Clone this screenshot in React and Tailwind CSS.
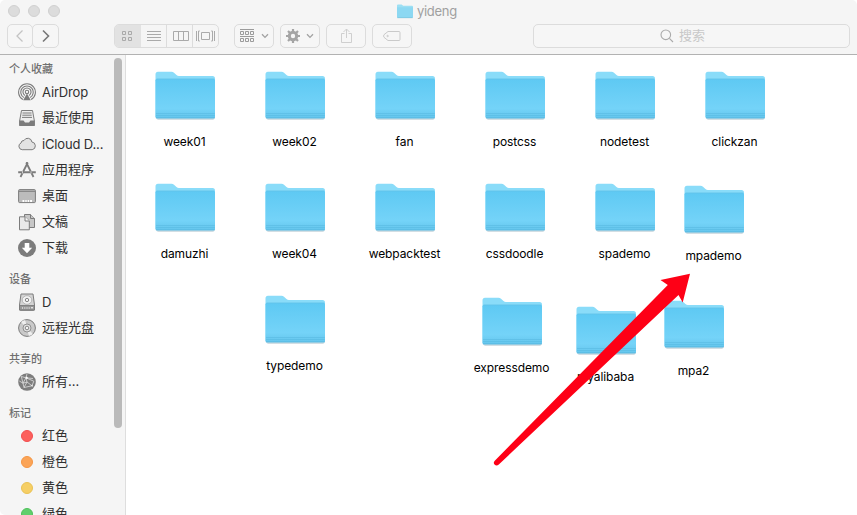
import React from 'react';

const folders = [
  ['week01', 155, 71], ['week02', 265, 71], ['fan', 375, 71], ['postcss', 485, 71], ['nodetest', 595, 71], ['clickzan', 705, 71],
  ['damuzhi', 155, 183], ['week04', 265, 183], ['webpacktest', 375, 183], ['cssdoodle', 485, 183], ['spademo', 595, 183], ['mpademo', 684, 185],
  ['typedemo', 265, 295], ['expressdemo', 482, 297], ['myalibaba', 576, 306], ['mpa2', 664, 300],
];

function FolderShape({ className }) {
  return (
    <svg className={className} viewBox="0 0 60 50" fill="none">
      <path d="M.5 46V3.2Q.5 .7 3 .7H16.5Q18 .7 19 1.7L21.5 4Q22.5 4.9 24 4.9H57.5Q60 4.9 60 7.4V46Z" fill="#8adcf9" />
      <path d="M1 46H60Q60 48.7 58 48.7H3Q1 48.7 1 46Z" fill="#c4d3da" />
      <path d="M.5 9.2Q.5 7.7 2 7.7H58.5Q60 7.7 60 9.2V46Q60 47.5 58.5 47.5H2Q.5 47.5 .5 46Z" fill="url(#folderFace)" />
      <path d="M1 42.5H59.7M1 44.5H59.7M1 46.5H59.7" stroke="#54b7df" strokeWidth=".5" />
      <path d="M1.5 8H59" stroke="#67bfe3" strokeWidth=".5" />
    </svg>
  );
}

function Folder({ name, x, y }) {
  return (
    <div className="absolute flex w-[60px] flex-col items-center" style={{ left: x - 126, top: y - 55 }}>
      <FolderShape className="h-[50px] w-[60px]" />
      <span className="mt-[13px] -ml-[1px] whitespace-nowrap text-[12px] leading-4 tracking-[-0.09px] text-black">{name}</span>
    </div>
  );
}

const g = '#7c7c7c';
const icons = {
  airdrop: (
    <g stroke={g} strokeWidth="1.1">
      <path d="M5 16.6A8.4 8.4 0 1 1 13 16.6M6 14.6A6.2 6.2 0 1 1 12 14.6M7 12.4A4 4 0 1 1 11 12.4" />
      <circle cx="9" cy="9" r="1.7" />
      <path d="M9 10.5L5.2 17.2H12.8Z" fill={g} stroke="none" />
    </g>
  ),
  recent: (
    <g>
      <path d="M3.5 1.5H14.5L16.4 12V16.5H1.6V12Z" fill="#ededed" stroke={g} />
      <path d="M4.5 4H13.5M4.3 6.2H13.7M4 8.4H14" stroke={g} />
      <path d="M1.5 11.5H5.5L7 13.5H11L12.5 11.5H16.5V17H1.5Z" fill={g} />
    </g>
  ),
  cloud: <path d="M4.2 14.7A3.5 3.5 0 0 1 3 8A2.8 2.8 0 0 1 6 5.5A4.2 4.2 0 0 1 13.9 7A3.9 3.9 0 0 1 14.2 14.7Z" fill="#e2e2e2" stroke={g} />,
  apps: (
    <g stroke={g} strokeWidth="1.8">
      <path d="M9.8 1.5L2.5 16M8.2 1.5L15.5 16" />
      <path d="M.2 11.3H17.8" strokeWidth="2" />
      <path d="M4.5 10.2V12.5M13 10.2V12.5" stroke="#f5f5f5" strokeWidth=".7" />
    </g>
  ),
  desktop: (
    <g>
      <rect x=".6" y="2.6" width="16.8" height="13" rx="1" fill="#bcbcbc" stroke={g} />
      <path d="M1 4.3H17" stroke={g} />
      <path d="M4.5 13H14V15H4.5Z" fill="#fff" />
      <path d="M6.8 13V15M9.2 13V15M11.6 13V15" stroke="#aaa" strokeWidth=".8" />
    </g>
  ),
  docs: (
    <g fill="#c7c7c7" stroke={g}>
      <path d="M6.5 1.5H12.5L16.5 5.5V14.5H6.5Z" />
      <path d="M12.5 1.5V5.5H16.5" />
      <path d="M1.5 3.8H7L11.3 8V16.8H1.5Z" fill="#e9e9e9" />
      <path d="M7 3.8V8H11.3" fill="#f7f7f7" />
    </g>
  ),
  download: (
    <g>
      <circle cx="9" cy="9" r="9" fill={g} />
      <path d="M6.7 4H11.3V8.7H14.2L9 14.2L3.8 8.7H6.7Z" fill="#fff" />
    </g>
  ),
  drive: (
    <g stroke={g}>
      <path d="M3 1H15L16.5 12V16.5Q16.5 17.3 15.7 17.3H2.3Q1.5 17.3 1.5 16.5V12Z" fill="#d4d4d4" />
      <ellipse cx="9" cy="7" rx="4.8" ry="4.3" fill="#f2f2f2" stroke="#aaa" strokeWidth=".8" />
      <circle cx="9" cy="7" r="1.7" strokeWidth=".9" />
      <path d="M1.5 12.6H16.5V17H1.5Z" fill="#999" />
      <path d="M4.5 14V16M6.8 14V16M9 14V16M11.2 14V16" stroke="#ddd" strokeWidth=".8" />
      <path d="M13 14.8H15" stroke="#fff" />
    </g>
  ),
  disc: (
    <g stroke={g}>
      <circle cx="9" cy="9" r="8.4" fill="#c9c9c9" />
      <path d="M9 9L3 3A8 8 0 0 1 7.2 1ZM9 9L15 15A8 8 0 0 1 10.8 17Z" fill="#eee" stroke="none" />
      <circle cx="9" cy="9" r="4" fill="#e3e3e3" strokeWidth=".8" />
      <circle cx="9" cy="9" r="1.8" fill="#f5f5f5" strokeWidth=".9" />
    </g>
  ),
  globe: (
    <g>
      <circle cx="9" cy="9" r="8.8" fill="#7d7d7d" />
      <path d="M3.3 3.5L8 4.8L15 5.5M8 4.8L5 10.2L9 9L14 12.8L15.8 8.2L8 4.8L9 9L6 14.5L14 12.8M5 10.2L6 14.5M1.3 8L5 10.2L3.3 3.5M9 .8L8 4.8" stroke="#dedede" strokeWidth=".8" />
      <path d="M7.8 3.6L9.6 4.1L9.7 5.8L7.8 5.8ZM13.2 11.8L15 12.4L14.2 14Z" fill="#fff" />
    </g>
  ),
};

function Item({ icon, dot, latin, children }) {
  return (
    <div className="flex h-[26px] shrink-0 items-center pl-[18px] text-[13px] text-[#303030]">
      <span className="flex w-[18px] justify-center">
        {icon ? (
          <svg width="18" height="18" viewBox="0 0 18 18" fill="none">{icons[icon]}</svg>
        ) : (
          <span className={'mr-px h-3 w-3 rounded-full border ' + dot} />
        )}
      </span>
      <span className={'ml-[6px] whitespace-nowrap ' + (latin ? 'pt-[2px] tracking-[-0.15px]' : '')}>{children}</span>
    </div>
  );
}

function Heading({ first, children }) {
  return (
    <div className={'flex shrink-0 items-center pl-[9px] text-[11px] font-medium text-[#6f6f6f] ' + (first ? 'h-6 pt-1' : 'h-7 pt-2')}>
      {children}
    </div>
  );
}

const button = 'flex h-6 items-center justify-center rounded-[5px] border border-[#dcdcdc] bg-[#f6f6f6]';

function Chevron() {
  return <svg width="8" height="6" viewBox="0 0 8 6" fill="none"><path d="M1 1.2L4 4.4L7 1.2" stroke="#a2a2a2" strokeWidth="1.3" /></svg>;
}

function Toolbar() {
  return (
    <header className="h-[55px] shrink-0 rounded-t-[5px] border-b border-[#b2b2b2] bg-[#f5f5f5]">
      <div className="flex h-6 items-center">
        <div className="flex w-[60px] gap-2 pb-[2px] pl-2">
          <i className="h-3 w-3 shrink-0 rounded-full border border-[#d0d0d0] bg-[#dcdcdc]" />
          <i className="h-3 w-3 shrink-0 rounded-full border border-[#d0d0d0] bg-[#dcdcdc]" />
          <i className="h-3 w-3 shrink-0 rounded-full border border-[#d0d0d0] bg-[#dcdcdc]" />
        </div>
        <div className="flex flex-1 items-center gap-[4px] pl-[337px] text-[13px] text-[#a0a0a0]">
          <svg className="-mt-[2px]" width="16" height="15" viewBox="0 0 16 15" fill="none">
            <path d="M0 13V1.5Q0 .5 1 .5H4.6L6.2 1.8H15Q16 1.8 16 2.8V13Z" fill="#9ddff3" />
            <path d="M0 3.2H16V13Q16 14 15 14H1Q0 14 0 13Z" fill="#8cd8f2" />
            <path d="M.3 13.7H15.7" stroke="#79bfd8" strokeWidth=".6" />
          </svg>
          <span className="-mt-[1px] tracking-[-0.3px]">yideng</span>
        </div>
      </div>
      <div className="flex pl-[7px]">
        <div className={button + ' w-[26px]'}>
          <svg width="10" height="14" viewBox="0 0 10 14" fill="none"><path d="M7.5 1.5L2 7L7.5 12.5" stroke="#c3c3c3" strokeWidth="1.3" /></svg>
        </div>
        <div className={button + ' -ml-px w-[27px]'}>
          <svg width="10" height="14" viewBox="0 0 10 14" fill="none"><path d="M2 1.5L7.5 7L2 12.5" stroke="#777" strokeWidth="1.6" /></svg>
        </div>
        <div className="ml-[55px] flex h-6 w-[105px] overflow-hidden rounded-[5px] border border-[#dcdcdc]">
          <div className="flex w-[26px] items-center justify-center bg-[#e2e2e2]">
            <svg className="-ml-[2px]" width="12" height="12" viewBox="0 0 12 12" fill="none" stroke="#aaa"><path d="M1.5 1.5h3v3h-3zM7.5 1.5h3v3h-3zM1.5 7.5h3v3h-3zM7.5 7.5h3v3h-3z" /></svg>
          </div>
          <div className="flex w-[26px] items-center justify-center border-r border-[#dcdcdc]">
            <svg width="14" height="12" viewBox="0 0 14 12" stroke="#aaa"><path d="M0 1.5H14M0 4.5H14M0 7.5H14M0 10.5H14" /></svg>
          </div>
          <div className="flex w-[26px] items-center justify-center border-r border-[#dcdcdc]">
            <svg className="ml-[2px]" width="16" height="12" viewBox="0 0 16 12" fill="none" stroke="#aaa"><path d="M.5 1.5h15v9h-15zM5.5 1.5v9M10.5 1.5v9" /></svg>
          </div>
          <div className="flex flex-1 items-center justify-center">
            <svg width="19" height="12" viewBox="0 0 19 12" fill="none" stroke="#aaa"><path d="M5.5 2.5h8v7h-8zM.5 1v10M3.8 1H2.5v10h1.3M15.2 1h1.3v10h-1.3M18.5 1v10" /></svg>
          </div>
        </div>
        <div className={button + ' ml-[15px] w-[40px] gap-[6px]'}>
          <svg width="15" height="14" viewBox="0 0 15 14" fill="none" stroke="#9b9b9b"><path d="M0 .5H14M0 7.5H14M.5 2.5h3v3h-3zM5.5 2.5h3v3h-3zM10.5 2.5h3v3h-3zM.5 9.5h3v3h-3zM5.5 9.5h3v3h-3zM10.5 9.5h3v3h-3z" /></svg>
          <Chevron />
        </div>
        <div className={button + ' ml-[6px] w-[40px] gap-[6px]'}>
          <svg width="14" height="14" viewBox="0 0 14 14" fill="none">
            <circle cx="7" cy="7" r="3.7" stroke="#a5a5a5" strokeWidth="3" />
            <path d="M7 0V3M7 11V14M0 7H3M11 7H14M2 2L4.2 4.2M9.8 9.8L12 12M12 2L9.8 4.2M4.2 9.8L2 12" stroke="#a5a5a5" strokeWidth="2.2" />
          </svg>
          <Chevron />
        </div>
        <div className={button + ' ml-[6px] w-[40px]'}>
          <svg width="13" height="16" viewBox="0 0 13 16" fill="none" stroke="#cfcfcf"><path d="M4.5 5.5H1.5V14.5H11.5V5.5H8.5M6.5 10V1M3.5 4L6.5 1L9.5 4" /></svg>
        </div>
        <div className={button + ' ml-[6px] w-[40px]'}>
          <svg width="18" height="12" viewBox="0 0 18 12" fill="none" stroke="#cacaca"><path d="M5 1.5H16Q17 1.5 17 2.5V9.5Q17 10.5 16 10.5H5L1 7.3Q0 6 1 4.7Z" /><circle cx="4.6" cy="6" r=".7" /></svg>
        </div>
        <div className={button + ' ml-[121px] w-[317px] gap-[5px] pr-[15px] text-[13px] text-[#c8c8c8]'}>
          <svg className="-ml-[3px]" width="14" height="14" viewBox="0 0 14 14" fill="none" stroke="#aaa" strokeWidth="1.1"><circle cx="5.8" cy="5.8" r="4.8" /><path d="M9.4 9.4L13 13" /></svg>
          <span>搜索</span>
        </div>
      </div>
    </header>
  );
}

export default function App() {
  return (
    <div className="flex h-[515px] w-[857px] flex-col overflow-hidden bg-white font-['Inter','Noto_Sans_CJK_SC',sans-serif]">
      <Toolbar />
      <div className="flex min-h-0 flex-1">
        <aside className="relative flex w-[126px] shrink-0 flex-col overflow-hidden rounded-bl-[5px] border-r border-[#dedede] bg-[#f5f5f5]">
          <Heading first>个人收藏</Heading>
          <Item icon="airdrop" latin>AirDrop</Item>
          <Item icon="recent">最近使用</Item>
          <Item icon="cloud" latin>iCloud D...</Item>
          <Item icon="apps">应用程序</Item>
          <Item icon="desktop">桌面</Item>
          <Item icon="docs">文稿</Item>
          <Item icon="download">下载</Item>
          <Heading>设备</Heading>
          <Item icon="drive" latin>D</Item>
          <Item icon="disc">远程光盘</Item>
          <Heading>共享的</Heading>
          <Item icon="globe">所有...</Item>
          <Heading>标记</Heading>
          <Item dot="bg-[#fc605c] border-[#f24e50]">红色</Item>
          <Item dot="bg-[#fba457] border-[#f59643]">橙色</Item>
          <Item dot="bg-[#f6cf65] border-[#eac254]">黄色</Item>
          <Item dot="bg-[#60cf6c] border-[#4ec05b]">绿色</Item>
          <div className="absolute left-[114px] top-[3px] h-[370px] w-2 rounded-full bg-[#bababa]" />
        </aside>
        <main className="relative flex-1 overflow-hidden bg-white">
          <svg className="absolute h-0 w-0">
            <defs>
              <linearGradient id="folderFace" x1="0" y1="0" x2="0" y2="1">
                <stop offset="0" stopColor="#5ec9f3" />
                <stop offset=".75" stopColor="#74d3f8" />
                <stop offset="1" stopColor="#64c5ec" />
              </linearGradient>
            </defs>
          </svg>
          {folders.map(([name, x, y]) => <Folder key={name} name={name} x={x} y={y} />)}
          <svg className="absolute left-0 top-0" width="731" height="460" viewBox="126 55 731 460">
            <path d="M495 460.5L667.8 285L660.5 280L690 273.8L682.7 302.5L678.5 295L498.8 464.5Q496.5 466.5 494.5 464.5Q492.8 462.5 495 460.5Z" fill="#fe0016" />
          </svg>
        </main>
      </div>
    </div>
  );
}
